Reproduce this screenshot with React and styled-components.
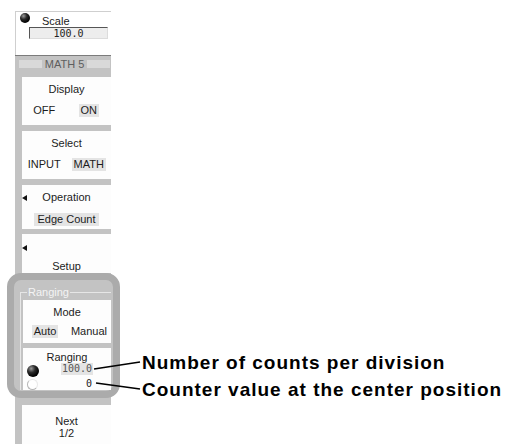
import React from 'react';
import styled, { createGlobalStyle } from 'styled-components';

const GlobalStyle = createGlobalStyle`
  body {
    margin: 0;
    background: #fff;
    font-family: "Liberation Sans", Arial, sans-serif;
  }
`;

const Screen = styled.div`
  position: relative;
  width: 505px;
  height: 444px;
  overflow: hidden;
  background: #fff;
`;

const Panel = styled.div`
  width: 96px;
  margin: 11px 0 0 15px;
  background: #c3c3c3;
  display: flex;
  flex-direction: column;
  color: #1c1c1c;
  font-size: 11px;
`;

const ScaleArea = styled.div`
  height: 44px;
  box-sizing: border-box;
  background: #fff;
  border-top: 1px solid #cfcfcf;
  border-left: 1px solid #cfcfcf;
  padding: 1px 0 0 4px;
`;

const ScaleRow = styled.div`
  display: flex;
  align-items: flex-start;
`;

const Knob = styled.span`
  display: block;
  flex: none;
  width: ${p => p.$size || 10}px;
  height: ${p => p.$size || 10}px;
  border-radius: 50%;
  box-sizing: border-box;
  background: ${p => p.$hollow
    ? '#fff'
    : 'radial-gradient(circle at 35% 30%, #9a9a9a 0, #2a2a2a 35%, #000 70%)'};
  border: ${p => p.$hollow ? '1px solid #b5b5b5' : 'none'};
  border-top-color: ${p => p.$hollow ? '#e8e8e8' : 'transparent'};
  border-right-color: ${p => p.$hollow ? '#e8e8e8' : 'transparent'};
`;

const ScaleLabel = styled.span`
  margin: 2px 0 0 12px;
  line-height: 12px;
`;

const ValueBox = styled.div`
  margin-left: 9px;
  width: 79px;
  height: 12px;
  box-sizing: border-box;
  background: #ededed;
  border-top: 1px solid #555;
  border-left: 1px solid #555;
  border-right: 1px solid #dcdcdc;
  border-bottom: 1px solid #dcdcdc;
  text-align: center;
  font: 10px/11px "DejaVu Sans Mono", "Liberation Mono", monospace;
  color: #222;
`;

const Header = styled.div`
  height: 22px;
  box-sizing: border-box;
  border-top: 1px solid #7b7b7b;
  padding: 4px 1px 0 4px;
`;

const HeaderBand = styled.div`
  height: 8px;
  background: #d9d9d9;
  display: flex;
  justify-content: center;
  align-items: center;
`;

const HeaderTitle = styled.span`
  background: #c3c3c3;
  padding: 0 3px;
  line-height: 8px;
  color: #5e5e5e;
`;

const Box = styled.div`
  margin: ${p => p.$gap ?? 6}px 0 0 ${p => p.$indent ?? 7}px;
  height: ${p => p.$h}px;
  box-sizing: border-box;
  padding-top: ${p => p.$pt ?? 6}px;
  background: #fdfdfd;
  display: flex;
  flex-direction: column;
  align-items: center;
`;

const Label = styled.div`
  line-height: ${p => p.$lh || 13}px;
  margin-top: ${p => p.$mt || 0}px;
  text-align: center;
`;

const Options = styled.div`
  width: 100%;
  margin-top: ${p => p.$mt ?? 8}px;
  display: grid;
  grid-template-columns: 1fr 1fr;
  justify-items: center;
`;

const Opt = styled.span`
  padding: 0 2px;
  line-height: 13px;
  background: ${p => p.$on ? '#e4e4e4' : 'transparent'};
`;

const Selected = styled.span`
  margin-top: 9px;
  padding: 0 3px;
  line-height: 13px;
  background: #e4e4e4;
`;

const TitleRow = styled.div`
  width: 100%;
  display: grid;
  grid-template-columns: 6px 1fr 6px;
  align-items: center;
`;

const Arrow = styled.span`
  display: block;
  width: 0;
  height: 0;
  border-top: 3px solid transparent;
  border-bottom: 3px solid transparent;
  border-right: 5px solid #111;
  align-self: ${p => p.$alone ? 'flex-start' : 'center'};
  margin-top: ${p => p.$mt || 0}px;
`;

const Ring = styled.div`
  margin: 0 -9px 0 -8px;
  border: 7px solid #ababab;
  border-radius: 14px;
  background: #c3c3c3;
  padding: 0 2px 1px 1px;
`;

const Group = styled.fieldset`
  margin: 6px 0 0 5px;
  padding: 0;
  min-width: 0;
  border: 1px solid #e6e6e6;
  border-right: none;
  border-bottom: none;
`;

const Legend = styled.legend`
  margin-left: 6px;
  padding: 0 1px;
  line-height: 13px;
  color: #f4f4f4;
`;

const ValueRow = styled.div`
  width: 100%;
  box-sizing: border-box;
  height: 14px;
  padding: 0 18px 0 4px;
  display: flex;
  justify-content: space-between;
  align-items: flex-start;
  & > span:first-child {
    margin-top: 2px;
  }
`;

const Value = styled.span`
  margin-top: ${p => p.$mt || 0}px;
  padding: 0 1px;
  font: 10px/12px "DejaVu Sans Mono", "Liberation Mono", monospace;
  background: ${p => p.$on ? '#e4e4e4' : 'transparent'};
  color: ${p => p.$on ? '#555' : '#222'};
`;

const Leaders = styled.svg`
  position: absolute;
  left: 0;
  top: 0;
  pointer-events: none;
`;

const Callout = styled.div`
  position: absolute;
  left: 142px;
  top: ${p => p.$top}px;
  font: bold 19px/19px "Liberation Sans", Arial, sans-serif;
  letter-spacing: 1px;
  color: #000;
  white-space: nowrap;
`;

export default function App() {
  return (
    <Screen>
      <GlobalStyle />
      <Panel>
        <ScaleArea>
          <ScaleRow>
            <Knob />
            <ScaleLabel>Scale</ScaleLabel>
          </ScaleRow>
          <ValueBox>100.0</ValueBox>
        </ScaleArea>
        <Header>
          <HeaderBand>
            <HeaderTitle>MATH 5</HeaderTitle>
          </HeaderBand>
        </Header>

        <Box $gap={0} $h={48}>
          <Label>Display</Label>
          <Options>
            <Opt>OFF</Opt>
            <Opt $on>ON</Opt>
          </Options>
        </Box>

        <Box $h={48}>
          <Label>Select</Label>
          <Options>
            <Opt>INPUT</Opt>
            <Opt $on>MATH</Opt>
          </Options>
        </Box>

        <Box $h={44}>
          <TitleRow>
            <Arrow />
            <Label>Operation</Label>
          </TitleRow>
          <Selected>Edge Count</Selected>
        </Box>

        <Box $gap={5} $h={39} $pt={11}>
          <Arrow $alone />
          <Label $mt={9}>Setup</Label>
        </Box>

        <Ring>
          <Group>
            <Legend>Ranging</Legend>
            <Box $gap={1} $indent={2} $h={43}>
              <Label>Mode</Label>
              <Options $mt={6}>
                <Opt $on>Auto</Opt>
                <Opt>Manual</Opt>
              </Options>
            </Box>
            <Box $gap={5} $indent={2} $h={42} $pt={3}>
              <Label $lh={12}>Ranging</Label>
              <ValueRow>
                <Knob $size={12} />
                <Value $on>100.0</Value>
              </ValueRow>
              <ValueRow>
                <Knob $size={11} $hollow />
                <Value $mt={1}>0</Value>
              </ValueRow>
            </Box>
          </Group>
        </Ring>

        <Box $gap={7} $h={60} $pt={10}>
          <Label $lh={12}>Next</Label>
          <Label $lh={12}>1/2</Label>
        </Box>
      </Panel>

      <Leaders width="505" height="444">
        <line x1="94" y1="369" x2="140" y2="362" stroke="#000" strokeWidth="1.6" />
        <line x1="96" y1="383" x2="140" y2="389" stroke="#000" strokeWidth="1.6" />
      </Leaders>
      <Callout $top={353}>Number of counts per division</Callout>
      <Callout $top={380}>Counter value at the center position</Callout>
    </Screen>
  );
}
